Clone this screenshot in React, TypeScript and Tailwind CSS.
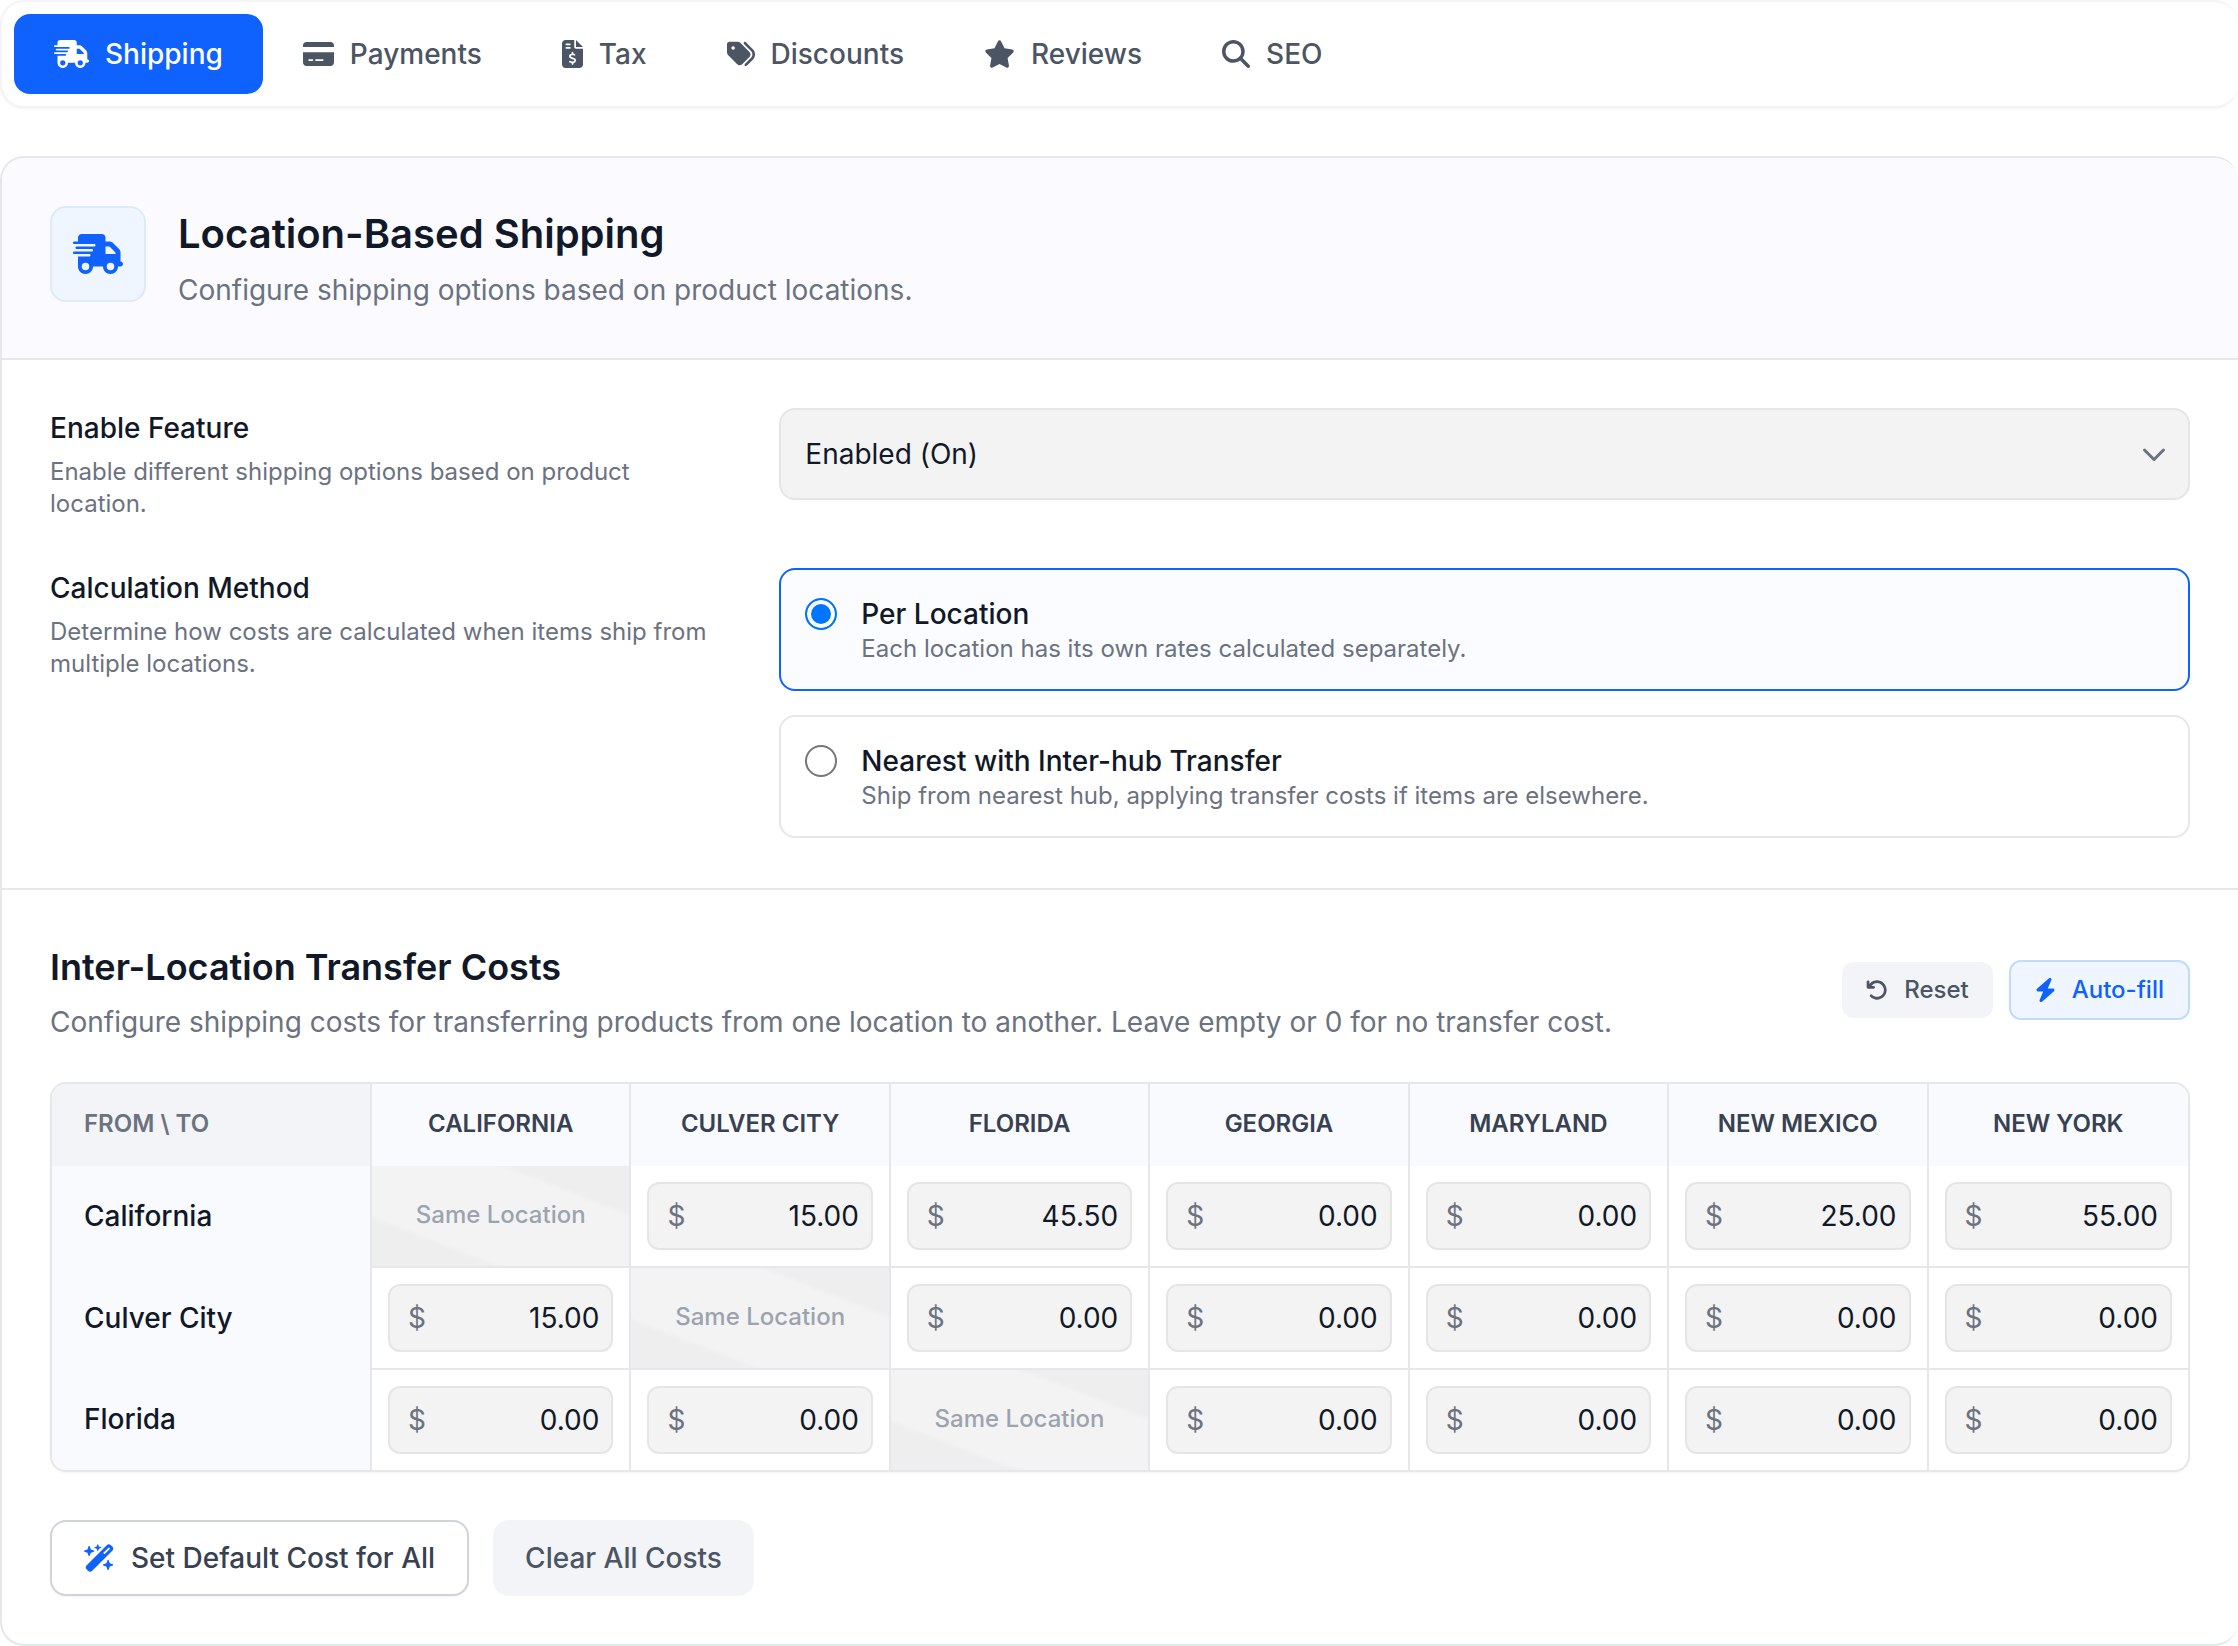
import { useState } from 'react'
import {
  FaArrowRotateLeft,
  FaBolt,
  FaCreditCard,
  FaFileInvoiceDollar,
  FaMagnifyingGlass,
  FaStar,
  FaTags,
  FaTruckFast,
  FaWandMagicSparkles,
} from 'react-icons/fa6'

const tabs = [
  { name: 'Shipping', icon: <FaTruckFast className="h-7 w-[35px]" /> },
  { name: 'Payments', icon: <FaCreditCard className="h-7 w-[31px]" /> },
  { name: 'Tax', icon: <FaFileInvoiceDollar className="h-7 w-[21px]" /> },
  { name: 'Discounts', icon: <FaTags className="h-7 w-7" /> },
  { name: 'Reviews', icon: <FaStar className="h-7 w-[31px]" /> },
  { name: 'SEO', icon: <FaMagnifyingGlass className="h-7 w-7" /> },
]

const methods = [
  {
    id: 'per-location',
    title: 'Per Location',
    text: 'Each location has its own rates calculated separately.',
  },
  {
    id: 'nearest',
    title: 'Nearest with Inter-hub Transfer',
    text: 'Ship from nearest hub, applying transfer costs if items are elsewhere.',
  },
]

const locations = [
  'California',
  'Culver City',
  'Florida',
  'Georgia',
  'Maryland',
  'New Mexico',
  'New York',
]

const initialCosts = [
  ['', '15.00', '45.50', '0.00', '0.00', '25.00', '55.00'],
  ['15.00', '', '0.00', '0.00', '0.00', '0.00', '0.00'],
  ['0.00', '0.00', '', '0.00', '0.00', '0.00', '0.00'],
]

const Tabs = () => {
  const [active, setActive] = useState('Shipping')

  return (
    <nav className="flex rounded-3xl border-y-2 border-l-2 border-[#f4f4f5] bg-white p-3 shadow-xs">
      {tabs.map((tab) => (
        <button
          key={tab.name}
          type="button"
          onClick={() => setActive(tab.name)}
          className={
            tab.name === active
              ? 'flex h-20 items-center gap-4 rounded-2xl bg-[#0f62fe] px-10 font-medium text-white'
              : 'flex h-20 items-center gap-4 rounded-2xl px-10 font-medium text-[#4b5563]'
          }
        >
          {tab.icon}
          {tab.name}
        </button>
      ))}
    </nav>
  )
}

const Settings = () => {
  const [method, setMethod] = useState('per-location')

  return (
    <section className="grid grid-cols-3 gap-12 border-b-2 border-[#e5e7eb] px-12 pt-12 pb-[50px]">
      <div>
        <label htmlFor="enable" className="block font-medium">
          Enable Feature
        </label>
        <p className="mt-2 text-2xl leading-8 text-[#6b7280]">
          Enable different shipping options based on product location.
        </p>
      </div>
      <div className="col-span-2 grid self-start">
        <select
          id="enable"
          className="col-start-1 row-start-1 h-[92px] appearance-none rounded-2xl border-2 border-[#e5e5e5] bg-[#f3f3f3] px-6"
        >
          <option>Enabled (On)</option>
          <option>Disabled (Off)</option>
        </select>
        <svg
          viewBox="0 0 24 16"
          className="pointer-events-none col-start-1 row-start-1 mr-6 h-4 w-6 self-center justify-self-end"
          fill="none"
          stroke="#6b7280"
          strokeWidth="3"
          strokeLinecap="round"
          strokeLinejoin="round"
        >
          <path d="M2.5 4l9.500 9.500 9.500-9.500" />
        </svg>
      </div>

      <div>
        <h3 id="method-label" className="font-medium">
          Calculation Method
        </h3>
        <p className="mt-2 text-2xl leading-8 text-[#6b7280]">
          Determine how costs are calculated when items ship from multiple
          locations.
        </p>
      </div>
      <div
        role="radiogroup"
        aria-labelledby="method-label"
        className="col-span-2 flex flex-col gap-6"
      >
        {methods.map((item) => (
          <label
            key={item.id}
            className={
              item.id === method
                ? 'flex items-start gap-6 rounded-2xl border-2 border-[#0f62fe] bg-[#fafcff] p-6 pb-[25px]'
                : 'flex items-start gap-6 rounded-2xl border-2 border-[#e5e7eb] bg-white p-6 pb-[25px]'
            }
          >
            <input
              type="radio"
              name="method"
              checked={item.id === method}
              onChange={() => setMethod(item.id)}
              className="mt-1 size-8 shrink-0 appearance-none rounded-full border-2 border-[#767676] bg-white checked:border-[#0075ff] checked:bg-[#0075ff] checked:shadow-[inset_0_0_0_4px_white]"
            />
            <span>
              <span className="block font-medium">{item.title}</span>
              <span className="block text-2xl leading-[30px] text-[#6b7280]">
                {item.text}
              </span>
            </span>
          </label>
        ))}
      </div>
    </section>
  )
}

const CostTable = () => {
  const [costs, setCosts] = useState(initialCosts)

  const update = (row: number, col: number, value: string) =>
    setCosts(
      costs.map((line, r) =>
        r === row ? line.map((cost, c) => (c === col ? value : cost)) : line
      )
    )

  return (
    <div className="mt-10 overflow-hidden rounded-2xl border-2 border-[#e5e7eb] shadow-xs">
      <table className="w-full table-fixed border-separate border-spacing-0">
        <thead>
          <tr className="text-2xl leading-8 uppercase">
            <th className="w-80 border-r-2 border-[#e5e7eb] bg-[#f3f4f7] px-8 pt-6 pb-[26px] text-left font-semibold text-[#6b7280]">
              From \ To
            </th>
            {locations.map((name) => (
              <th
                key={name}
                scope="col"
                className="border-r-2 border-[#e5e7eb] bg-[#f9fafe] pt-6 pb-[26px] text-center font-semibold text-[#374151] last:border-r-0"
              >
                {name}
              </th>
            ))}
          </tr>
        </thead>
        <tbody>
          {costs.map((line, row) => (
            <tr key={locations[row]} className="group">
              <th
                scope="row"
                className="border-r-2 border-[#e5e7eb] bg-[#f9fafe] px-8 pb-0.5 text-left font-medium"
              >
                {locations[row]}
              </th>
              {line.map((cost, col) =>
                row === col ? (
                  <td
                    key={col}
                    className="border-r-2 border-b-2 border-[#e5e7eb] bg-[linear-gradient(to_top_right,#eeeeee_23%,#f3f3f3_26%,#f3f3f3_74%,#eeeeee_77%)] pb-0.5 text-center text-2xl leading-8 font-medium text-[#9ca3af] group-last:border-b-0"
                  >
                    Same Location
                  </td>
                ) : (
                  <td
                    key={col}
                    className="border-r-2 border-b-2 border-[#e5e7eb] p-4 group-last:border-b-0 last:border-r-0"
                  >
                    <label className="flex h-[68px] items-center rounded-xl border-2 border-[#e5e5e5] bg-[#f3f3f3] pr-3 pl-[18px]">
                      <span className="text-[#6b7280]">$</span>
                      <input
                        aria-label={`${locations[row]} to ${locations[col]}`}
                        value={cost}
                        onChange={(e) => update(row, col, e.target.value)}
                        className="w-full min-w-0 text-right outline-none"
                      />
                    </label>
                  </td>
                )
              )}
            </tr>
          ))}
        </tbody>
      </table>
    </div>
  )
}

const App = () => (
  <main className="bg-white font-[Inter,sans-serif] text-[28px] leading-10 text-[#111827]">
    <Tabs />

    <div className="mt-12 overflow-hidden rounded-3xl border-y-2 border-l-2 border-[#e5e7eb] bg-white">
      <header className="flex items-start gap-8 border-b-2 border-[#e5e7eb] bg-[#fbfbff] p-12">
        <div className="flex size-24 items-center justify-center rounded-2xl border-2 border-[#dbeafe] bg-[#eff6ff] text-[#0f62fe]">
          <FaTruckFast className="h-10 w-[50px]" />
        </div>
        <div>
          <h1 className="text-[40px] leading-14 font-semibold">
            Location-Based Shipping
          </h1>
          <p className="mt-2 text-[#6b7280]">
            Configure shipping options based on product locations.
          </p>
        </div>
      </header>

      <Settings />

      <section className="p-12">
        <div className="flex items-center justify-between">
          <div>
            <h2 className="text-4xl leading-[58px] font-semibold">
              Inter-Location Transfer Costs
            </h2>
            <p className="mt-1.5 text-[#6b7280]">
              Configure shipping costs for transferring products from one
              location to another. Leave empty or 0 for no transfer cost.
            </p>
          </div>
          <div className="flex items-center gap-4 text-2xl leading-8 font-medium">
            <button
              type="button"
              className="flex h-14 items-center gap-4 rounded-xl bg-[#f3f4f7] px-6 text-[#4b5563]"
            >
              <FaArrowRotateLeft className="size-[22px]" />
              Reset
            </button>
            <button
              type="button"
              className="flex h-[60px] items-center gap-4 rounded-xl border-2 border-[#bfdbfe] bg-[#eff6ff] px-6 text-[#0f62fe]"
            >
              <FaBolt className="h-6 w-[21px]" />
              Auto-fill
            </button>
          </div>
        </div>

        <CostTable />

        <div className="mt-12 flex gap-6 font-medium">
          <button
            type="button"
            className="flex h-[76px] items-center gap-4 rounded-2xl border-2 border-[#d1d3dc] bg-white px-8 text-[#374151] shadow-xs"
          >
            <FaWandMagicSparkles className="h-7 w-[31px] text-[#0f62fe]" />
            Set Default Cost for All
          </button>
          <button
            type="button"
            className="h-[76px] rounded-2xl bg-[#f3f4f7] px-8 text-[#4b5563]"
          >
            Clear All Costs
          </button>
        </div>
      </section>
    </div>
  </main>
)

export default App
